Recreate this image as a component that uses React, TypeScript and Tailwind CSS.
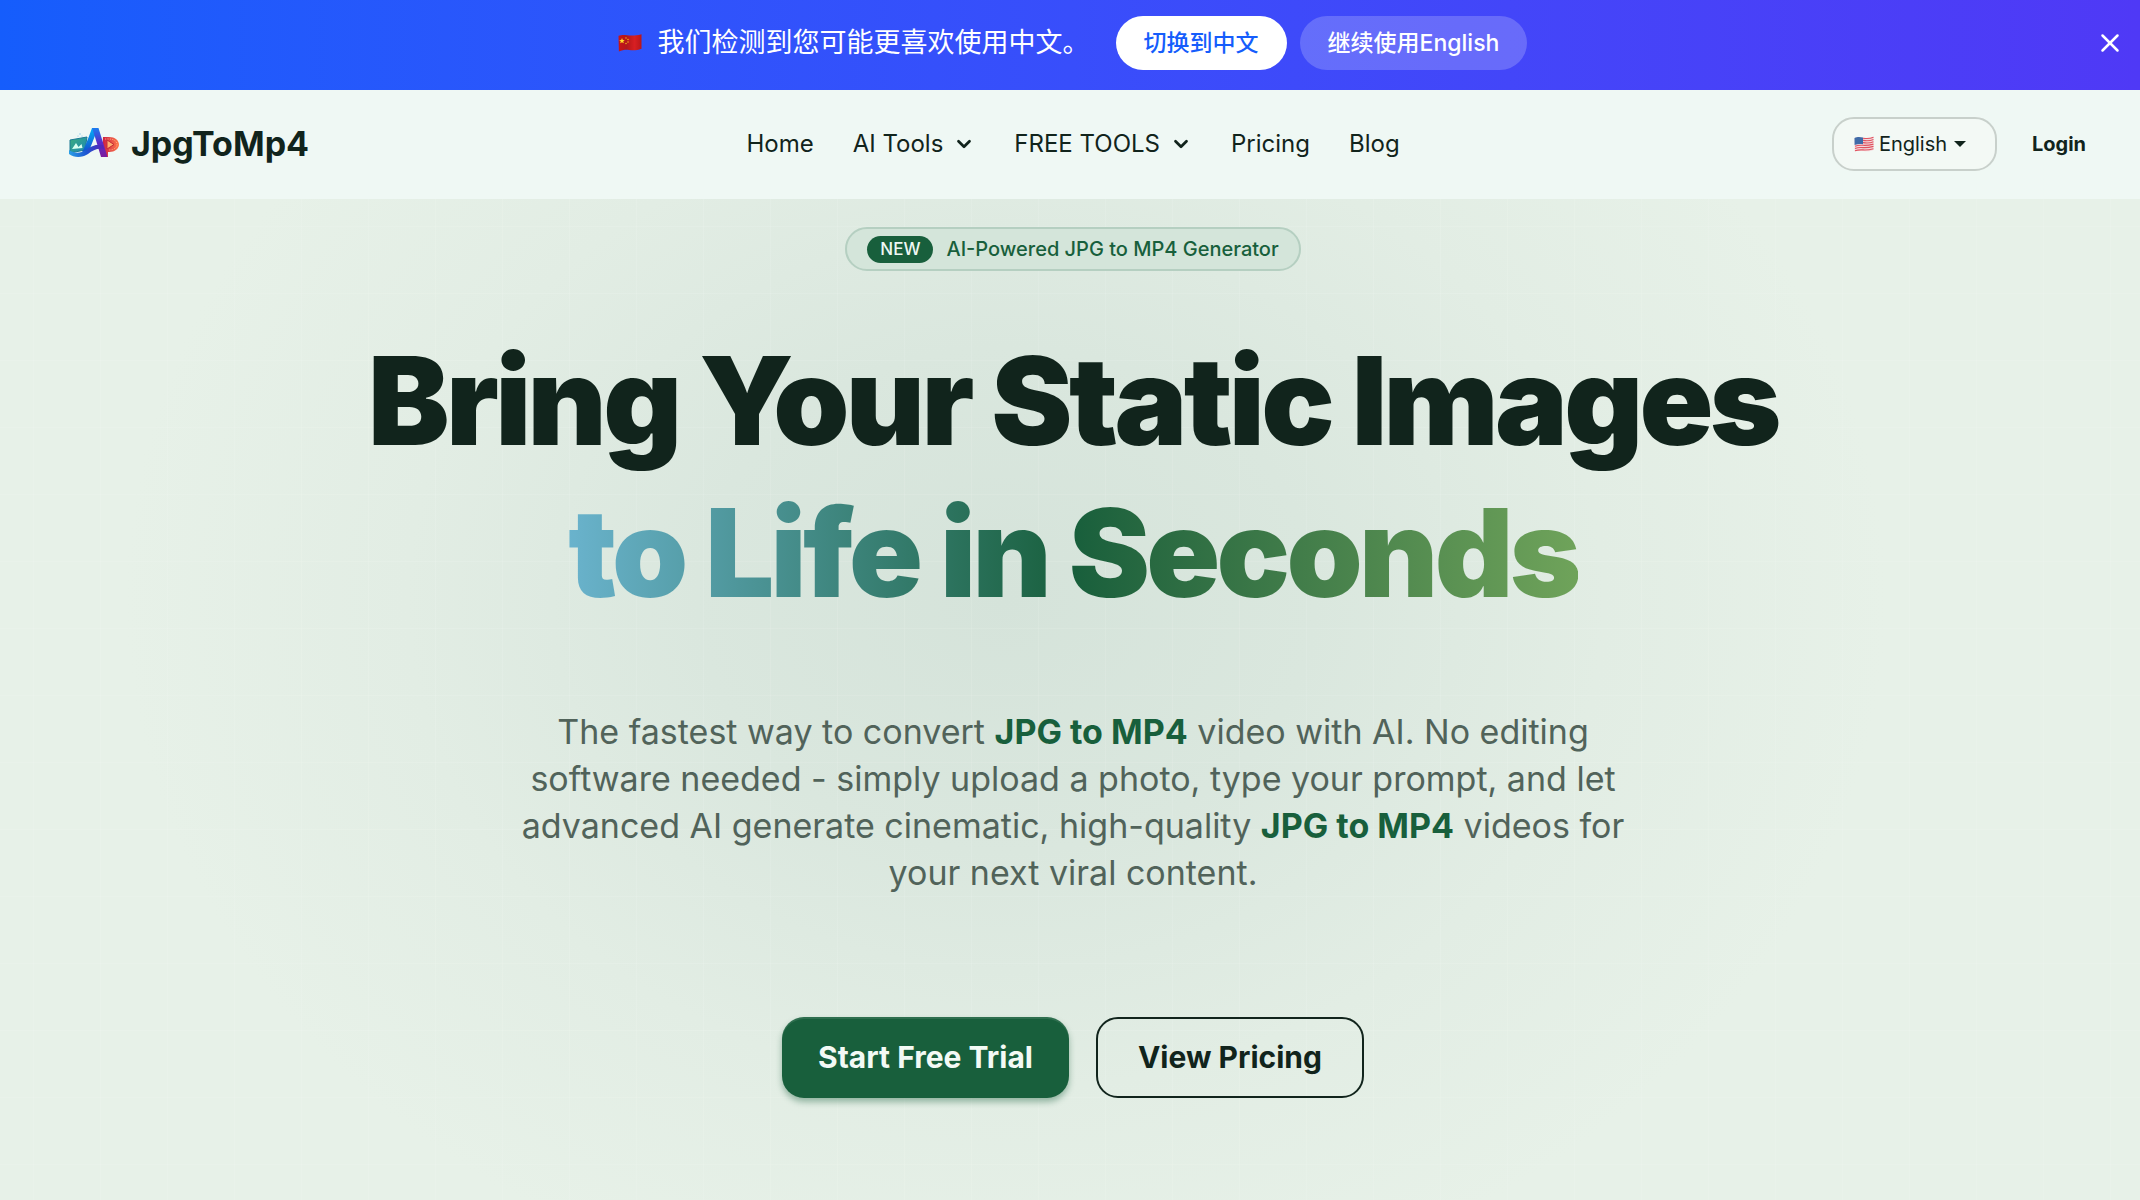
import { ChevronDown, X } from 'lucide-react';

function ChinaFlag() {
  return (
    <svg viewBox="0 0 24 18" className="h-[18px] w-6" aria-hidden="true">
      <defs>
        <linearGradient id="cn" x1="0" y1="0" x2="1" y2="0"><stop stopColor="#c81418" /><stop offset=".35" stopColor="#b3161a" /><stop offset=".7" stopColor="#d81f22" /><stop offset="1" stopColor="#b8161a" /></linearGradient>
      </defs>
      <path d="M.5 1.800C4 .6 6 .9 9 1.200s8 .8 14.500-1v14.500c-5 1.900-9 1.500-12.500 1.200S4 16 .9 17.600z" fill="url(#cn)" />
      <path d="M4 4l.8 1.900 2 .1-1.600 1.300.6 2L4 8.200 2.200 9.300l.6-2L1.200 6l2-.1z" fill="#ffde2a" />
      <g fill="#f0a51c"><circle cx="8" cy="4" r=".8" /><circle cx="10" cy="5.500" r=".8" /><circle cx="10" cy="8" r=".8" /><circle cx="8" cy="9.500" r=".8" /></g>
    </svg>
  );
}

function UsFlag() {
  return (
    <svg viewBox="0 0 20 16" className="h-4 w-5" aria-hidden="true">
      <path d="M.5 2C4 .6 6 1 9 1.600s7 .6 10.500-1V14c-4 1.700-7 1.400-10 .9S4 14.200.8 15.500z" fill="#f3dadd" />
      <g stroke="#e0525f" strokeWidth="1.100" fill="none">
        <path d="M9 2.200q6 1 10.500-.9M9 4.400q6 1 10.500-.9M9 6.600q6 1 10.500-.9M1 10.200q3-1.200 8-.9t10.500-1.200M1 12.500q3-1.200 8-.9t10.500-1.200M1 14.800q3-1.200 8-.9t10.500-1.200" />
      </g>
      <path d="M.5 2C4 .6 6 1 9 1.600v6.600C6 7.600 3 8 .6 9z" fill="#3f6ba8" />
    </svg>
  );
}

function Logo() {
  return (
    <svg viewBox="0 0 52 32" className="h-8 w-13" aria-hidden="true">
      <defs>
        <linearGradient id="frame" x1="0" y1="0" x2="1" y2="1"><stop stopColor="#3cae7c" /><stop offset="1" stopColor="#1a86b8" /></linearGradient>
        <linearGradient id="swoosh" x1="0" y1="0" x2="1" y2="0"><stop stopColor="#2aa0e6" /><stop offset=".5" stopColor="#1d55d2" /><stop offset="1" stopColor="#5a22b4" /></linearGradient>
        <linearGradient id="left" x1="0" y1="0" x2="0" y2="1"><stop stopColor="#06b0f8" /><stop offset="1" stopColor="#1440c4" /></linearGradient>
        <linearGradient id="right" x1="0" y1="0" x2="0" y2="1"><stop stopColor="#1a7cf0" /><stop offset=".5" stopColor="#5a2cc8" /><stop offset="1" stopColor="#7c1c9c" /></linearGradient>
        <linearGradient id="film" x1="0" y1="0" x2="1" y2="0"><stop stopColor="#c81c44" /><stop offset="1" stopColor="#ff7a48" /></linearGradient>
      </defs>
      <g fill="#7cc8ec"><circle cx="12" cy="6" r=".7" /><circle cx="14" cy="8" r=".6" /><circle cx="10" cy="8" r=".6" /></g>
      <path d="M2 12l17-3-2 13-15 3z" fill="url(#frame)" stroke="#1c7a94" strokeWidth="1" />
      <path d="M4 21l4-6 2.500 4 3-3 1 4z" fill="#d8fff0" />
      <path d="M35 9h6c6 0 10 3.500 10 7.500S47 24 41 24h-1v5h-6z" fill="url(#film)" />
      <path d="M37 11h4c4.500 0 8 2.300 8 5.500S45.500 22 41 22" fill="none" stroke="#ffb48a" strokeWidth=".8" strokeDasharray="1.200 1.200" />
      <path d="M39 12l7 4.500-7 4.500z" fill="#ffb070" stroke="#c42a34" strokeWidth="1" />
      <path d="M24 0h6l-9 23q-3 5-8 5h-1q5-8 12-28z" fill="url(#left)" />
      <path d="M24 0h6.500l9 29h-6.500l-6-20z" fill="url(#right)" />
      <path d="M1 22c6 4 12 3 17 0 5-4 10-6 17-5l1 4c-7-1-11 1-16 5-6 4-14 4-19 0z" fill="url(#swoosh)" />
    </svg>
  );
}

const backdrop =
  'bg-[linear-gradient(to_right,#ffffff18_1px,transparent_1px),linear-gradient(to_bottom,#ffffff18_1px,transparent_1px),radial-gradient(ellipse_880px_720px_at_47%_40%,#d5e3da_0%,#dae7de_35%,#e2ede4_68%,#e7f1e8_100%)] bg-[size:67px_67px,67px_67px,100%_100%] bg-[position:33px_27px,33px_27px,0px_0px]';

export default function App() {
  return (
    <div className="flex min-h-screen flex-col bg-[#e7f1e8] font-[Inter,'Noto_Sans_CJK_SC',sans-serif] text-[#11241c]">
      <div className="flex h-[90px] items-start bg-linear-to-r from-[#155dfc] via-[#384efb] to-[#4f39f6] pt-4 text-white">
        <div className="w-[66px]" />
        <div className="flex flex-1 items-center justify-center">
          <ChinaFlag />
          <p className="mr-[26px] ml-4 text-[27px] leading-[54px]">我们检测到您可能更喜欢使用中文。</p>
          <button className="mr-[13px] h-[54px] rounded-full bg-white px-7 text-[23px] font-medium text-[#155dfc]">切换到中文</button>
          <button className="h-[54px] rounded-full bg-white/20 px-7 text-[23px] font-medium">继续使用English</button>
        </div>
        <button aria-label="Close" className="flex h-[54px] w-[61px] items-center justify-center"><X size={30} strokeWidth={2} /></button>
      </div>
      <header className="flex h-[109px] items-center bg-[#eff8f4] pr-[54px] pb-[2px] pl-[68px]">
        <a href="#" className="flex flex-1 items-center gap-[11px] text-[34px] font-bold"><Logo />JpgToMp4</a>
        <nav className="mr-2 flex items-center gap-[39px] text-[24px]">
          <a href="#">Home</a>
          <button className="flex items-center gap-[10px]">AI Tools<ChevronDown size={22} strokeWidth={3} /></button>
          <button className="flex items-center gap-[10px]">FREE TOOLS<ChevronDown size={22} strokeWidth={3} /></button>
          <a href="#">Pricing</a>
          <a href="#">Blog</a>
        </nav>
        <div className="flex flex-1 items-center justify-end gap-[35px] text-[20px]">
          <button className="flex h-[54px] w-[165px] items-center gap-[5px] rounded-[22px] border-2 border-[#c8d0cb] bg-[#f3f9f5] px-5">
            <UsFlag />English
            <svg viewBox="0 0 12 6" className="ml-[2px] h-[6px] w-3" aria-hidden="true"><path d="M0 0h12L6 6z" fill="currentColor" /></svg>
          </button>
          <a href="#" className="font-bold">Login</a>
        </div>
      </header>
      <main className={`flex flex-1 flex-col items-center pt-7 pr-4 pl-[22px] text-center ${backdrop}`}>
        <div className="flex h-[44px] items-center gap-[13px] rounded-full border-2 border-[#b5cfc1] bg-[#d4e5da] px-5 text-[20px] font-medium text-[#185f3c]">
          <span className="rounded-full bg-[#185f3c] px-[13px] text-[17px] leading-[27px] text-[#eff8f4]">NEW</span>
          AI-Powered JPG to MP4 Generator
        </div>
        <h1 className="mt-[54px] text-[122px] leading-[152px] font-black tracking-[-0.03em]">
          Bring Your Static Images
          <span className="mx-auto block w-fit bg-linear-to-r from-[#6ab3cd] via-[#185f3c] to-[#6fa35a] bg-clip-text text-transparent">to Life in Seconds</span>
        </h1>
        <p className="mt-[79px] max-w-[1110px] text-[34px] leading-[47px] text-[#51635a]">
          The fastest way to convert <strong className="font-bold text-[#185f3c]">JPG to MP4</strong> video with AI. No editing software needed - simply upload a photo, type your prompt, and let advanced AI generate cinematic, high-quality <strong className="font-bold text-[#185f3c]">JPG to MP4</strong> videos for your next viral content.
        </p>
        <div className="mt-[121px] flex gap-[27px] text-[30px] font-bold">
          <button className="h-[81px] rounded-[22px] bg-[#185f3c] px-9 text-[#f3faf5] shadow-[0_4px_6px_#185f3c66,inset_0_2px_0_#ffffff1a]">Start Free Trial</button>
          <button className="h-[81px] rounded-[22px] border-2 border-[#11241c] px-10">View Pricing</button>
        </div>
      </main>
    </div>
  );
}
